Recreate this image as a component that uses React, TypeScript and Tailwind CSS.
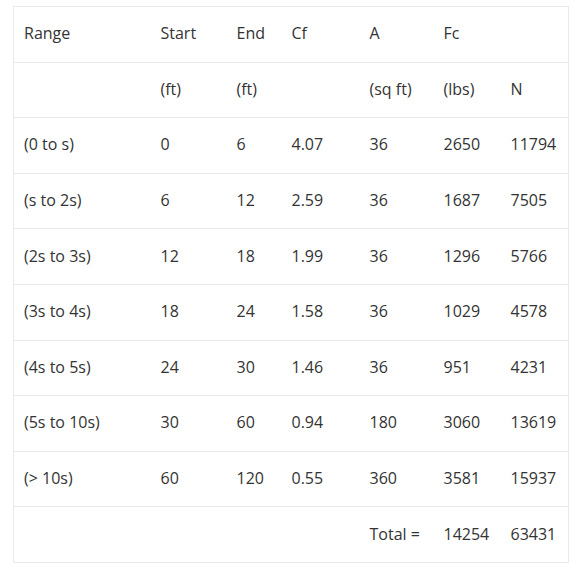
const rows: string[][] = [
  ['Range', 'Start', 'End', 'Cf', 'A', 'Fc', ''],
  ['', '(ft)', '(ft)', '', '(sq ft)', '(lbs)', 'N'],
  ['(0 to s)', '0', '6', '4.07', '36', '2650', '11794'],
  ['(s to 2s)', '6', '12', '2.59', '36', '1687', '7505'],
  ['(2s to 3s)', '12', '18', '1.99', '36', '1296', '5766'],
  ['(3s to 4s)', '18', '24', '1.58', '36', '1029', '4578'],
  ['(4s to 5s)', '24', '30', '1.46', '36', '951', '4231'],
  ['(5s to 10s)', '30', '60', '0.94', '180', '3060', '13619'],
  ['(> 10s)', '60', '120', '0.55', '360', '3581', '15937'],
  ['', '', '', '', 'Total =', '14254', '63431'],
];

const widths = ['w-[137px]', 'w-[76px]', 'w-[55px]', 'w-[78px]', 'w-[74px]', 'w-[67px]', 'w-[68px]'];

export default function App() {
  return (
    <div className="bg-white min-h-[577px] pt-[6px] pl-[13px] font-['Open_Sans',sans-serif] text-[16px] text-[#333]">
      <table className="border-collapse border border-[#eaeaea] table-fixed w-[556px]">
        <colgroup>
          {widths.map((w, i) => (
            <col key={i} className={w} />
          ))}
        </colgroup>
        <tbody>
          {rows.map((r, i) => (
            <tr key={i} className="border-b border-[#eaeaea] h-[55.6px]">
              {r.map((c, j) => (
                <td key={j} className="pl-[10px] p-0 pb-[2px] align-middle whitespace-nowrap">
                  {c}
                </td>
              ))}
            </tr>
          ))}
        </tbody>
      </table>
    </div>
  );
}
